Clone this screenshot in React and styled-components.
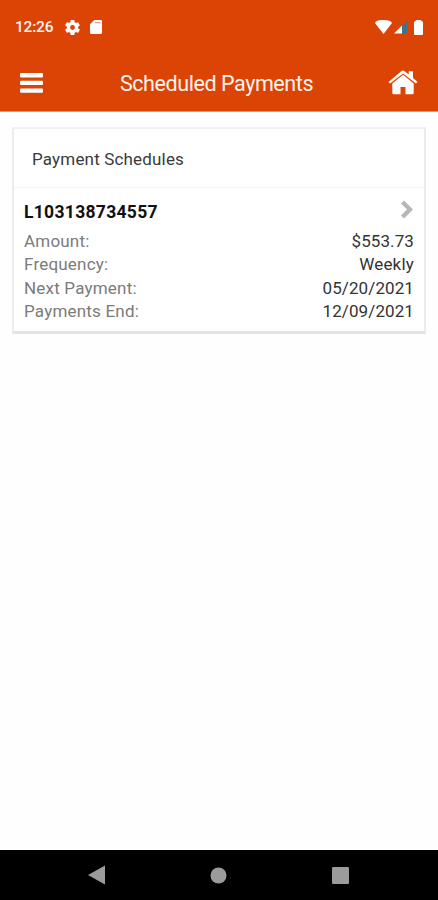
import React from "react";
import styled, { createGlobalStyle } from "styled-components";

const GlobalStyle = createGlobalStyle`
  * { box-sizing: border-box; }
  body { margin: 0; background: #fff; font-family: Roboto, "Liberation Sans", sans-serif; overflow: hidden; }
  svg { display: block; flex: none; }
`;

const Screen = styled.div`
  display: flex;
  flex-direction: column;
  width: 438px;
  height: 900px;
  background: #fefefe;
`;

const Top = styled.header`
  height: 112px;
  background: #db4405;
  border-bottom: 1px solid #e88e68;
  color: #fff3ef;
`;

const StatusBar = styled.div`
  display: flex;
  align-items: center;
  height: 54px;
  padding: 0 15px;
`;

const Clock = styled.span`
  width: 50px;
  font-size: 15.5px;
  font-weight: 500;
  line-height: 20px;
  letter-spacing: -0.2px;
`;

const StatusIcons = styled.div`
  display: flex;
  align-items: center;
  gap: ${(p) => p.$gap}px;
  margin-left: ${(p) => (p.$end ? "auto" : "0")};
`;

const SignalGroup = styled.div`
  display: flex;
  align-items: center;
  gap: 2px;
`;

const AppBar = styled.div`
  display: grid;
  grid-template-columns: 60px 1fr 60px;
  align-items: center;
  height: 58px;
  padding: 0 20px;
`;

const IconButton = styled.button`
  display: flex;
  justify-content: ${(p) => (p.$end ? "flex-end" : "flex-start")};
  padding: 0 0 ${(p) => (p.$end ? 2 : 0)}px;
  border: 0;
  background: none;
  color: #fff;
`;

const Title = styled.h1`
  margin: 0;
  padding: 2px 5px 0 0;
  text-align: center;
  white-space: nowrap;
  font-size: 21.5px;
  font-weight: 400;
  line-height: 28px;
  letter-spacing: -0.42px;
`;

const Content = styled.main`
  flex: 1;
  padding: 15px 12px 0;
`;

const Card = styled.section`
  height: 207px;
  border: 2px solid #ececec;
  border-top-color: #f0f1f0;
  border-bottom: 3px solid #e3e3e3;
  background: #fff;
`;

const CardHeader = styled.h2`
  display: flex;
  align-items: center;
  height: 59px;
  margin: 0;
  padding: 2px 0 0 18px;
  border-bottom: 1px solid #f3f3f3;
  color: #3a3a3a;
  font-size: 17px;
  font-weight: 400;
  letter-spacing: 0.17px;
`;

const Schedule = styled.div`
  padding: 10px 10px 0;
`;

const AccountRow = styled.div`
  display: flex;
  align-items: flex-start;
  justify-content: space-between;
  height: 32px;
  padding-top: 2px;
`;

const Account = styled.strong`
  padding-top: 2px;
  color: #111;
  font-size: 17.5px;
  font-weight: 700;
  line-height: 20px;
  letter-spacing: 0.3px;
`;

const Details = styled.dl`
  margin: 0;
`;

const Detail = styled.div`
  display: flex;
  justify-content: space-between;
  height: 23.3px;
  font-size: 17px;
  line-height: 23px;
`;

const Label = styled.dt`
  color: #7b7b7b;
  letter-spacing: 0.2px;
`;

const Value = styled.dd`
  margin: 0;
  color: #333;
  letter-spacing: ${(p) => p.$spacing}px;
`;

const NavBar = styled.nav`
  display: flex;
  align-items: center;
  justify-content: space-between;
  height: 50px;
  padding: 0 89px 0 88px;
  background: #000;
  color: #9b9b9b;
`;

const details = [
  ["Amount:", "$553.73", 0.1],
  ["Frequency:", "Weekly", 0.2],
  ["Next Payment:", "05/20/2021", 0.1],
  ["Payments End:", "12/09/2021", 0.1],
];

const Gear = () => (
  <svg width="15" height="15" viewBox="2 2 20 20" fill="#fff">
    <path d="M19.43 12.98c.04-.32.07-.64.07-.98s-.03-.66-.07-.98l2.11-1.65c.19-.15.24-.42.12-.64l-2-3.46c-.12-.22-.39-.3-.61-.22l-2.49 1c-.52-.4-1.08-.73-1.69-.98l-.38-2.65A.49.49 0 0 0 14 2h-4c-.25 0-.46.18-.49.42l-.38 2.65c-.61.25-1.17.59-1.69.98l-2.49-1c-.23-.09-.49 0-.61.22l-2 3.46c-.13.22-.07.49.12.64l2.11 1.65c-.04.32-.07.65-.07.98s.03.66.07.98l-2.11 1.65c-.19.15-.24.42-.12.64l2 3.46c.12.22.39.3.61.22l2.49-1c.52.4 1.08.73 1.69.98l.38 2.65c.03.24.24.42.49.42h4c.25 0 .46-.18.49-.42l.38-2.65c.61-.25 1.17-.59 1.69-.98l2.49 1c.23.09.49 0 .61-.22l2-3.46c.12-.22.07-.49-.12-.64zM12 15.2A3.2 3.2 0 1 1 12 8.8a3.2 3.2 0 0 1 0 6.4z" />
  </svg>
);

const SdCard = () => (
  <svg width="12" height="14" viewBox="0 0 12 14">
    <path d="M4.3 0H10.7Q12 0 12 1.3V12.7Q12 14 10.7 14H1.3Q0 14 0 12.7V4.3Z" fill="#fff" />
    <path d="M5 2.6h5.5" stroke="#dca58c" strokeWidth="1.4" />
  </svg>
);

const Wifi = () => (
  <svg width="17" height="14" viewBox="0 0 17 14" fill="#fff">
    <path d="M0 3Q1-.2 8.500 0T17 3L8.500 14Z" />
  </svg>
);

const Signal = () => (
  <svg width="13" height="14" viewBox="0 0 13 14">
    <path d="M0 13.5 8 5.500V13.500Z" fill="#fff" />
    <path d="M8 5.5 13 .5V13.5H8Z" fill="#42718a" />
  </svg>
);

const Battery = () => (
  <svg width="9" height="15" viewBox="0 0 9 15" fill="#fff">
    <path d="M2.5 0h4L9 2V14Q9 15 8 15H1Q0 15 0 14V2Z" />
  </svg>
);

const Menu = () => (
  <svg width="23" height="20" viewBox="0 0 23 20" fill="#fff">
    <rect width="23" height="4.4" rx="1" />
    <rect y="7.7" width="23" height="4.4" rx="1" />
    <rect y="15.4" width="23" height="4.4" rx="1" />
  </svg>
);

const Home = () => (
  <svg width="30" height="25" viewBox="0 0 30 25" fill="#fff">
    <path d="M4.3 13.4 15 4.700 25.700 13.400V22.800Q25.700 24.300 24.200 24.300H17.500V17H12.500V24.300H5.800Q4.300 24.300 4.300 22.800Z" />
    <path d="M.5 11.9 13.3 1.2Q15 0 16.700 1.200L20.700 4.500V1.300H25V8.100L29.500 11.900 28 13.500 15 3.600 2 13.500Z" />
  </svg>
);

const Chevron = () => (
  <svg width="14" height="20" viewBox="0 0 14 20" fill="none">
    <path d="M2.5 2 10 9.500 2.500 17" stroke="#b6b6b6" strokeWidth="4.2" />
  </svg>
);

export default function App() {
  return (
    <>
      <GlobalStyle />
      <Screen>
        <Top>
          <StatusBar>
            <Clock>12:26</Clock>
            <StatusIcons $gap={10}><Gear /><SdCard /></StatusIcons>
            <StatusIcons $gap={7} $end>
              <SignalGroup><Wifi /><Signal /></SignalGroup>
              <Battery />
            </StatusIcons>
          </StatusBar>
          <AppBar>
            <IconButton aria-label="Menu"><Menu /></IconButton>
            <Title>Scheduled Payments</Title>
            <IconButton aria-label="Home" $end><Home /></IconButton>
          </AppBar>
        </Top>
        <Content>
          <Card>
            <CardHeader>Payment Schedules</CardHeader>
            <Schedule>
              <AccountRow><Account>L103138734557</Account><Chevron /></AccountRow>
              <Details>
                {details.map(([label, value, spacing]) => (
                  <Detail key={label}>
                    <Label>{label}</Label>
                    <Value $spacing={spacing}>{value}</Value>
                  </Detail>
                ))}
              </Details>
            </Schedule>
          </Card>
        </Content>
        <NavBar>
          <svg width="17" height="20" viewBox="0 0 17 20" fill="currentColor"><path d="M0 10 17 .5V19.5Z" /></svg>
          <svg width="17" height="17" viewBox="0 0 17 17" fill="currentColor"><circle cx="8.5" cy="8.5" r="8" /></svg>
          <svg width="17" height="17" viewBox="0 0 17 17" fill="currentColor"><rect width="17" height="17" rx="1.2" /></svg>
        </NavBar>
      </Screen>
    </>
  );
}
